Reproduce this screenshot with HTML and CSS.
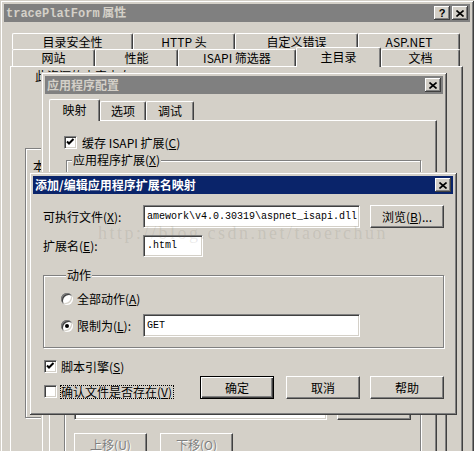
FILE: index.html
```html
<!DOCTYPE html>
<html lang="zh">
<head>
<meta charset="utf-8">
<title>tracePlatForm 属性</title>
<link rel="stylesheet" href="styles.css">
</head>
<body>

<div class="win w1">
  <div class="cap inactive">
    <span class="cap-title"><span class="lat">tracePlatForm</span> 属性</span>
    <span class="cap-btns">
      <span class="cb help">?</span>
      <span class="cb"><svg width="8" height="7" viewBox="0 0 8 7"><path d="M0.5 0.5L7.5 6.5M7.5 0.5L0.5 6.5" stroke="#000" stroke-width="1.6"/></svg></span>
    </span>
  </div>
  <div class="tabs1">
    <div class="tabrow back">
      <div class="tab">目录安全性</div>
      <div class="tab">HTTP 头</div>
      <div class="tab">自定义错误</div>
      <div class="tab">ASP.NET</div>
    </div>
    <div class="tabrow front">
      <div class="tab">网站</div>
      <div class="tab">性能</div>
      <div class="tab">ISAPI 筛选器</div>
      <div class="tab sel">主目录</div>
      <div class="tab">文档</div>
    </div>
  </div>
  <div class="panel p1">
    <div class="p1-src">此资源的内容来自:</div>
    <div class="p1-group">本</div>
  </div>
</div>

<div class="win w2">
  <div class="cap inactive">
    <span class="cap-title">应用程序配置</span>
    <span class="cap-btns">
      <span class="cb"><svg width="8" height="7" viewBox="0 0 8 7"><path d="M0.5 0.5L7.5 6.5M7.5 0.5L0.5 6.5" stroke="#000" stroke-width="1.6"/></svg></span>
    </span>
  </div>
  <div class="tabrow tabs2">
    <div class="tab sel">映射</div>
    <div class="tab">选项</div>
    <div class="tab">调试</div>
  </div>
  <div class="panel p2">
    <div class="chkrow p2-cache">
      <span class="chk on"><svg width="11" height="11" viewBox="0 0 11 11"><path d="M2 4.5L4 6.5L8.5 2" fill="none" stroke="#000" stroke-width="2"/></svg></span>
      <span class="chk-label">缓存 ISAPI 扩展(<u>C</u>)</span>
    </div>
    <fieldset class="grp grp-ext">
      <legend>应用程序扩展(<u>X</u>)</legend>
      <div class="listbox ext-list"></div>
    </fieldset>
    <div class="grp grp-wild">
      <div class="wild-row">
        <div class="listbox wild-list"></div>
        <div class="wild-btns">
          <span class="btn"></span>
          <span class="btn"></span>
          <span class="btn"></span>
        </div>
      </div>
      <div class="move-row">
        <span class="btn dis">上移(<u>U</u>)</span>
        <span class="btn dis">下移(<u>O</u>)</span>
      </div>
    </div>
  </div>
</div>

<div class="win w3">
  <div class="cap active">
    <span class="cap-title">添加/编辑应用程序扩展名映射</span>
    <span class="cap-btns">
      <span class="cb"><svg width="8" height="7" viewBox="0 0 8 7"><path d="M0.5 0.5L7.5 6.5M7.5 0.5L0.5 6.5" stroke="#000" stroke-width="1.6"/></svg></span>
    </span>
  </div>
  <div class="body3">
    <div class="frow row-exe">
      <label class="flabel">可执行文件(<u>X</u>):</label>
      <span class="input wide"><span class="mono">amework\v4.0.30319\aspnet_isapi.dll</span></span>
      <span class="btn browse">浏览(<u>B</u>)...</span>
    </div>
    <div class="frow row-ext">
      <label class="flabel">扩展名(<u>E</u>):</label>
      <span class="input short"><span class="mono">.html</span></span>
    </div>
    <fieldset class="grp grp-verbs">
      <legend>动作</legend>
      <div class="radio-row r1">
        <span class="radio"></span>
        <span class="radio-label">全部动作(<u>A</u>)</span>
      </div>
      <div class="radio-row r2">
        <span class="radio on"></span>
        <span class="radio-label fixed">限制为(<u>L</u>):</span>
        <span class="input wide"><span class="mono">GET</span></span>
      </div>
    </fieldset>
    <div class="bottom3">
      <div class="chkcol">
        <div class="chkrow">
          <span class="chk on"><svg width="11" height="11" viewBox="0 0 11 11"><path d="M2 4.5L4 6.5L8.5 2" fill="none" stroke="#000" stroke-width="2"/></svg></span>
          <span class="chk-label">脚本引擎(<u>S</u>)</span>
        </div>
        <div class="chkrow second">
          <span class="chk"></span>
          <span class="chk-label focus">确认文件是否存在(<u>V</u>)</span>
        </div>
      </div>
      <div class="btns3">
        <span class="btn def">确定</span>
        <span class="btn">取消</span>
        <span class="btn">帮助</span>
      </div>
    </div>
  </div>
</div>

<div class="wm">http://blog.csdn.net/taoerchun</div>

</body>
</html>
```
FILE: styles.css
```css
* { box-sizing: border-box; }
html, body { margin: 0; padding: 0; }
body {
  position: relative;
  width: 474px;
  height: 451px;
  overflow: hidden;
  background: #d4d0c8;
  color: #000;
  font-family: "Noto Sans CJK SC", "Liberation Sans", sans-serif;
  font-size: 12px;
  line-height: 14px;
}
u { text-decoration: underline; text-underline-offset: 1px; }

/* windows */
.win {
  position: absolute;
  padding: 4px;
  background: #d4d0c8;
  box-shadow: inset 1px 1px #d4d0c8, inset -1px -1px #404040, inset 2px 2px #fff, inset -2px -2px #808080;
}
.w1 { left: 0; top: 0; width: 474px; height: 480px; }
.w2 { left: 41px; top: 72px; width: 406px; height: 420px; }
.w3 { left: 29px; top: 172px; width: 428px; height: 243px; }

.cap {
  display: flex;
  align-items: center;
  justify-content: space-between;
  height: 18px;
  padding: 0 2px;
  font-weight: bold;
  white-space: nowrap;
}
.cap.inactive { background: #808080; color: #d4d0c8; }
.cap.active { background: #0a246a; color: #fff; }
.cap-title .lat { font-family: "Liberation Mono", monospace; }
.cap-btns { display: flex; gap: 2px; }
.cb {
  width: 16px;
  height: 14px;
  display: flex;
  align-items: center;
  justify-content: center;
  background: #d4d0c8;
  color: #000;
  box-shadow: inset -1px -1px #404040, inset 1px 1px #fff, inset -2px -2px #808080;
  font: bold 11px/14px "Liberation Sans", sans-serif;
}

/* tabs */
.tabrow { display: flex; align-items: flex-end; }
.tab {
  display: flex;
  align-items: center;
  justify-content: center;
  height: 17px;
  background: #d4d0c8;
  border-top: 1px solid #fff;
  border-left: 1px solid #fff;
  border-right: 1px solid #404040;
  box-shadow: inset -1px 0 #808080;
  border-radius: 2px 2px 0 0;
  white-space: nowrap;
}
.tab.sel {
  position: relative;
  z-index: 1;
  height: 20px;
  margin-bottom: -1px;
  padding-bottom: 1px;
}
.tabs1 { margin: 11px 0 0 8px; }
.tabs1 .back { height: 16px; }
.tabs1 .back .tab { height: 16px; }
.tabs1 .front { height: 17px; }
.tabs1 .back .tab:nth-child(1) { width: 121px; }
.tabs1 .back .tab:nth-child(2) { width: 102px; }
.tabs1 .back .tab:nth-child(3) { width: 123px; }
.tabs1 .back .tab:nth-child(4) { width: 102px; }
.tabs1 .front .tab:nth-child(1) { width: 83px; }
.tabs1 .front .tab:nth-child(2) { width: 83px; }
.tabs1 .front .tab:nth-child(3) { width: 118px; }
.tabs1 .front .tab:nth-child(4) { width: 85px; }
.tabs1 .front .tab:nth-child(5) { width: 79px; }

.tabs2 { margin: 7px 0 0 4px; height: 19px; }
.tabs2 .tab { height: 19px; }
.tabs2 .tab.sel { height: 22px; }
.tabs2 .tab:nth-child(1) { width: 51px; }
.tabs2 .tab:nth-child(2) { width: 46px; }
.tabs2 .tab:nth-child(3) { width: 48px; }

.panel {
  border-top: 1px solid #fff;
  border-left: 1px solid #fff;
  border-right: 1px solid #404040;
  box-shadow: inset -1px 0 #808080;
}
.p1 { margin-left: 6px; width: 453px; height: 420px; }
.p1-src { margin: 2px 0 0 24px; }
.p1-group {
  margin: 65px 0 0 14px;
  width: 300px;
  height: 270px;
  padding: 10px 0 0 7px;
  border: 1px solid #808080;
  box-shadow: 1px 1px #fff, inset 1px 1px #fff;
}

.p2 { margin-left: 4px; width: 388px; height: 400px; }

/* group boxes */
.grp {
  margin: 0;
  padding: 0;
  min-width: 0;
  border: 1px solid #808080;
  box-shadow: 1px 1px #fff, inset 1px 1px #fff;
}
.grp legend {
  padding: 0 1px;
  margin-left: 5px;
  background: #d4d0c8;
  line-height: 14px;
}

/* checkboxes */
.chkrow { display: flex; align-items: center; height: 13px; }
.chk {
  flex: none;
  width: 13px;
  height: 13px;
  background: #fff;
  border: 1px solid;
  border-color: #808080 #fff #fff #808080;
  box-shadow: inset 1px 1px #404040, inset -1px -1px #d4d0c8;
  display: flex;
  align-items: center;
  justify-content: center;
}
.chk svg { display: block; }
.chk-label { margin-left: 5px; white-space: nowrap; }

.p2-cache { margin: 15px 0 0 14px; }
.grp-ext { margin: 4px 0 0 16px; width: 355px; height: 150px; }
.ext-list { margin: 5px 0 0 4px; width: 339px; height: 120px; }
.grp-wild { margin: 11px 0 0 14px; width: 357px; padding: 20px 0 20px 9px; }
.wild-row { display: flex; gap: 10px; }
.wild-list { width: 253px; height: 85px; }
.wild-btns { display: flex; flex-direction: column; gap: 8px; }
.wild-btns .btn { width: 74px; }
.move-row { display: flex; gap: 13px; margin-top: 13px; }
.move-row .btn { width: 73px; }

.listbox {
  background: #fff;
  border: 1px solid;
  border-color: #808080 #fff #fff #808080;
  box-shadow: inset 1px 1px #404040, inset -1px -1px #d4d0c8;
}

/* inputs & buttons */
.input {
  display: flex;
  align-items: center;
  height: 23px;
  padding: 0 3px;
  background: #fff;
  border: 1px solid;
  border-color: #808080 #fff #fff #808080;
  box-shadow: inset 1px 1px #404040, inset -1px -1px #d4d0c8;
  white-space: nowrap;
  overflow: hidden;
}
.mono { font-family: "Liberation Mono", monospace; font-size: 10px; }
.input.wide { width: 217px; }
.input.short { width: 60px; height: 22px; }

.btn {
  display: flex;
  align-items: center;
  justify-content: center;
  height: 23px;
  background: #d4d0c8;
  border: 1px solid;
  border-color: #fff #404040 #404040 #fff;
  box-shadow: inset -1px -1px #808080;
  white-space: nowrap;
}
.btn.def {
  border-color: #000;
  box-shadow: inset 1px 1px #fff, inset -1px -1px #404040, inset -2px -2px #808080;
}
.btn.dis { color: #808080; text-shadow: 1px 1px #fff; }

/* add/edit dialog body */
.body3 { padding: 11px 9px 0 10px; }
.frow { display: flex; align-items: center; }
.flabel { width: 100px; white-space: nowrap; }
.row-exe { height: 23px; }
.browse { width: 74px; margin-left: 10px; }
.row-ext { height: 22px; margin-top: 7px; }

.grp-verbs { margin-top: 11px; width: 401px; padding: 0 0 10px 17px; }
.radio-row { display: flex; align-items: center; }
.r1 { height: 14px; margin-top: 10px; }
.r2 { height: 23px; margin-top: 8px; }
.radio {
  position: relative;
  flex: none;
  width: 12px;
  height: 12px;
  border-radius: 50%;
  background: #fff;
  box-shadow: inset 1px 1px #808080, inset -1px -1px #fff, inset 2px 2px #404040, inset -2px -2px #d4d0c8;
}
.radio.on::after {
  content: "";
  position: absolute;
  left: 4px;
  top: 4px;
  width: 4px;
  height: 4px;
  border-radius: 50%;
  background: #000;
}
.radio-label { margin-left: 4px; white-space: nowrap; }
.radio-label.fixed { width: 66px; }

.bottom3 { display: flex; align-items: flex-end; margin-top: 12px; }
.chkcol { display: flex; flex-direction: column; margin-left: 1px; }
.chkcol .chk-label { margin-left: 3px; }
.chkcol .chk-label:not(.focus) { margin-left: 4px; }
.chkrow.second { margin-top: 12px; }
.focus { border: 1px dotted #000; padding: 0 1px 0 0; line-height: 12px; }
.btns3 { display: flex; margin-left: auto; margin-bottom: -1px; }
.btns3 .btn { width: 74px; }
.btns3 .btn + .btn { margin-left: 12px; }
.btns3 .btn:last-child { margin-left: 10px; }

/* watermark */
.wm {
  position: absolute;
  left: 98px;
  top: 226px;
  font-family: "Liberation Serif", serif;
  font-size: 18px;
  letter-spacing: 2.5px;
  color: rgba(110, 105, 95, 0.15);
  white-space: nowrap;
  pointer-events: none;
}
```
